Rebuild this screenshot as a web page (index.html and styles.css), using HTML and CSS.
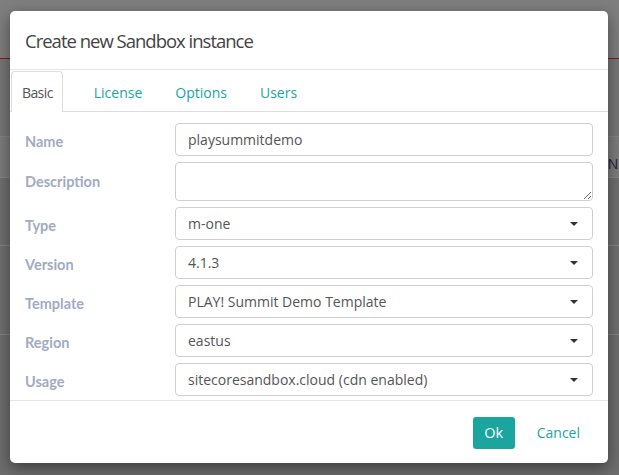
FILE: index.html
```html
<!DOCTYPE html>
<html lang="en">
<head>
<meta charset="utf-8">
<title>Create new Sandbox instance</title>
<link rel="stylesheet" href="styles.css">
</head>
<body>
<div class="page">
  <div class="topbar"></div>
  <div class="bg-row bg-row-1"></div>
  <div class="bg-row bg-row-2"><span class="bg-text">SN</span></div>
  <div class="bg-row bg-row-3"></div>
  <div class="bg-row bg-row-4"></div>
  <div class="bg-row bg-row-5"></div>
</div>

<div class="modal">
  <div class="modal-header">
    <h4 class="modal-title">Create new Sandbox instance</h4>
  </div>
  <ul class="tabs">
    <li class="tab active">Basic</li>
    <li class="tab">License</li>
    <li class="tab">Options</li>
    <li class="tab">Users</li>
  </ul>
  <div class="modal-body">
    <div class="row">
      <label class="label">Name</label>
      <div class="control">playsummitdemo</div>
    </div>
    <div class="row row-top">
      <label class="label">Description</label>
      <textarea class="control textarea"></textarea>
    </div>
    <div class="row">
      <label class="label">Type</label>
      <div class="control select">m-one<span class="caret"></span></div>
    </div>
    <div class="row">
      <label class="label">Version</label>
      <div class="control select">4.1.3<span class="caret"></span></div>
    </div>
    <div class="row">
      <label class="label">Template</label>
      <div class="control select">PLAY! Summit Demo Template<span class="caret"></span></div>
    </div>
    <div class="row">
      <label class="label">Region</label>
      <div class="control select">eastus<span class="caret"></span></div>
    </div>
    <div class="row">
      <label class="label">Usage</label>
      <div class="control select">sitecoresandbox.cloud (cdn enabled)<span class="caret"></span></div>
    </div>
  </div>
  <div class="modal-footer">
    <button class="btn btn-primary">Ok</button>
    <button class="btn btn-link">Cancel</button>
  </div>
</div>
</body>
</html>
```

FILE: styles.css
```css
html, body {
  margin: 0;
  padding: 0;
}
body {
  width: 619px;
  height: 475px;
  background: #737373;
  overflow: hidden;
  position: relative;
  font-family: "Open Sans", "Noto Sans", sans-serif;
}

/* background page (dimmed behind the modal) */
.page {
  width: 619px;
}
.topbar {
  height: 58px;
  background: #7e7e7e;
  border-bottom: 1px solid #7c1d22;
}
.bg-row {
  background: #767676;
  border-bottom: 1px solid #858585;
}
.bg-row-1 { height: 77px; }
.bg-row-2 {
  height: 40px;
  background: #7c7c7c;
  position: relative;
}
.bg-text {
  position: absolute;
  left: 600px;
  top: 17px;
  font-size: 14px;
  color: #1e1b3a;
}
.bg-row-3 { height: 67px; background: #6f6f6f; }
.bg-row-4 { height: 88px; background: #6f6f6f; }
.bg-row-5 { height: 150px; background: #6d6d6d; border-bottom: 0; }

/* modal */
.modal {
  position: absolute;
  left: 10px;
  top: 11px;
  width: 598px;
  height: 452px;
  background: #fff;
  border-radius: 5px;
  box-shadow: 0 5px 15px rgba(0, 0, 0, 0.45);
  display: flex;
  flex-direction: column;
  overflow: hidden;
}
.modal-header {
  height: 58px;
  border-bottom: 1px solid #e5e5e5;
  padding: 0 15px;
  display: flex;
  align-items: center;
}
.modal-title {
  margin: 0;
  font-size: 18.5px;
  font-weight: 400;
  letter-spacing: -1px;
  color: #444;
  line-height: 22px;
  padding-top: 1px;
}

.tabs {
  list-style: none;
  margin: 0;
  padding: 1px 0 0 1px;
  display: flex;
  border-bottom: 1px solid #ddd;
  height: 40px;
}
.tab {
  box-sizing: border-box;
  height: 40px;
  padding: 2px 10px 0;
  margin-right: 11px;
  font-size: 14px;
  line-height: 37px;
  color: #1ba59f;
  border: 1px solid transparent;
  border-bottom: 0;
  border-radius: 4px 4px 0 0;
  background: transparent;
}
.tab.active {
  color: #555;
  background: #fff;
  border-color: #ddd;
  padding: 2px 9px 0 10px;
  margin-right: 20px;
  height: 41px;
  letter-spacing: -0.6px;
}

.modal-body {
  flex: 1;
  padding: 11px 15px 3px;
  display: flex;
  flex-direction: column;
  gap: 6px;
  border-bottom: 1px solid #e5e5e5;
}
.row {
  display: flex;
  align-items: center;
}
.label {
  width: 150px;
  flex: none;
  font-family: "Lato", "Open Sans", sans-serif;
  font-weight: 700;
  font-size: 14.5px;
  color: #a1abc2;
  padding-top: 3px;
}
.row-top .label {
  padding-top: 0;
}
.control {
  box-sizing: border-box;
  width: 418px;
  height: 33px;
  border: 1px solid #cfcfcf;
  border-radius: 4px;
  padding: 0 12px;
  font-family: "Open Sans", "Noto Sans", sans-serif;
  font-size: 14px;
  color: #555;
  line-height: 31px;
  background: #fff;
  position: relative;
}
.textarea {
  height: 39px;
  margin: 0;
  display: block;
  resize: vertical;
  outline: none;
}
.select {
  padding-right: 30px;
}
.caret {
  position: absolute;
  right: 14px;
  top: 14px;
  width: 0;
  height: 0;
  border-top: 4px solid #333;
  border-left: 4px solid transparent;
  border-right: 4px solid transparent;
}

.modal-footer {
  height: 62px;
  padding: 0 16px;
  display: flex;
  align-items: center;
  justify-content: flex-end;
  gap: 10px;
}
.btn {
  font-family: "Open Sans", "Noto Sans", sans-serif;
  font-size: 14.5px;
  height: 32px;
  border-radius: 3px;
  border: 0;
  cursor: pointer;
}
.btn-primary {
  background: #1ba59f;
  color: #fff;
  padding: 0 11px;
  width: 42px;
  margin-top: 1px;
}
.btn-link {
  background: transparent;
  color: #1ba59f;
  font-size: 14px;
  padding: 0 12px;
}
```
